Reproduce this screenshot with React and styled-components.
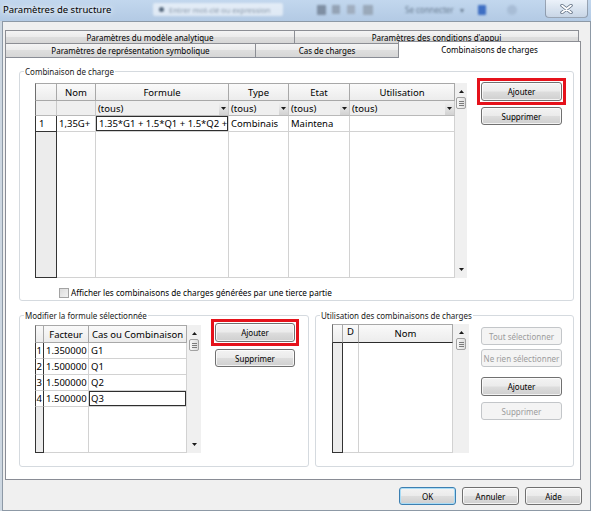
import React from "react";
import styled, { createGlobalStyle, css } from "styled-components";

const GlobalStyle = createGlobalStyle`
  html, body { margin: 0; padding: 0; background: #ffffff; }
  body { font-family: "Noto Sans", "Open Sans", sans-serif; font-size: 8px; color: #000; }
  *, *::before, *::after { box-sizing: border-box; }
`;

const Window = styled.div`
  width: 591px;
  height: 511px;
  display: flex;
  flex-direction: column;
  background: #cdd7e1;
`;

/* ---------- title bar (aero glass) ---------- */
const TitleBar = styled.div`
  height: 21px;
  flex-shrink: 0;
  display: flex;
  align-items: flex-start;
  background: linear-gradient(180deg, #c2d7ee 0%, #b3cae4 100%);
`;
const Title = styled.div`
  width: 145px;
  padding-left: 3px;
  font-size: 9.5px;
  line-height: 19px;
  white-space: nowrap;
  text-shadow: 0 0 4px #fff, 0 0 8px #fff;
`;
const Glass = styled.div`
  flex: 1;
  height: 19px;
  display: flex;
  align-items: center;
  filter: blur(1.2px);
`;
const SearchBox = styled.div`
  margin-left: 8px;
  width: 130px;
  height: 13px;
  border-radius: 2px;
  background: rgba(255, 255, 255, 0.55);
  display: flex;
  align-items: center;
  gap: 5px;
  padding-left: 6px;
  color: #8796a8;
  font-size: 7.5px;
  white-space: nowrap;
`;
const Dot = styled.span`
  width: 5px;
  height: 5px;
  border-radius: 50%;
  background: #53657a;
`;
const GlassText = styled.span`
  margin-left: ${(p) => p.$ml}px;
  color: #66798e;
  font-size: 8px;
  white-space: nowrap;
`;
const GlassSquare = styled.span`
  margin-left: ${(p) => p.$ml}px;
  width: ${(p) => p.$w}px;
  height: ${(p) => p.$h}px;
  border-radius: ${(p) => (p.$round ? "50%" : "1px")};
  background: ${(p) => p.$c};
`;
const CloseBtn = styled.div`
  width: 43px;
  height: 18px;
  margin-right: 3px;
  border: 1px solid rgba(90, 105, 125, 0.55);
  border-top: none;
  border-radius: 0 0 4px 4px;
  background: linear-gradient(180deg, rgba(245, 248, 252, 0.8), rgba(205, 216, 230, 0.8));
  display: flex;
  align-items: center;
  justify-content: center;
`;

/* ---------- dialog body ---------- */
const Body = styled.div`
  margin-left: 2px;
  flex: 1;
  background: #f0f0f0;
  border: 1px solid #8d99a6;
  padding: 8px 9px 0 2px;
  display: flex;
  flex-direction: column;
`;
const TabRow = styled.div`
  display: flex;
  align-items: flex-end;
  height: ${(p) => p.$h}px;
`;
const Tab = styled.div`
  width: ${(p) => p.$w}px;
  height: 100%;
  flex-shrink: 0;
  display: flex;
  align-items: center;
  justify-content: center;
  border: 1px solid #8c8e94;
  border-bottom: none;
  background: linear-gradient(180deg, #f4f4f4 0%, #ebebeb 50%, #dedede 50%, #d6d6d6 100%);
  white-space: nowrap;
  & + & { margin-left: -1px; }
  ${(p) =>
    p.$active &&
    css`
      background: #fff;
      height: 17px;
      margin-bottom: -1px;
      position: relative;
      z-index: 1;
      padding-bottom: 2px;
    `}
`;
const Panel = styled.div`
  width: 576px;
  height: 423px;
  flex-shrink: 0;
  background: #fff;
  border: 1px solid #898c95;
  padding: 8px 6px 12px 13px;
  display: flex;
  flex-direction: column;
  gap: 9px;
`;
const Group = styled.fieldset`
  margin: 0;
  min-width: 0;
  flex-shrink: 0;
  width: ${(p) => p.$w}px;
  height: ${(p) => p.$h}px;
  padding: 0 0 0 4px;
  border: 1px solid #d5dadf;
  border-radius: 3px;
`;
const Legend = styled.legend`
  padding: 0 1px;
  font-size: 8px;
  line-height: 11px;
  color: #1a1a1a;
`;
const GroupBody = styled.div`
  display: flex;
  align-items: flex-start;
  gap: ${(p) => p.$gap}px;
  padding-left: ${(p) => p.$pl}px;
  padding-top: ${(p) => p.$pt || 0}px;
`;
const Col = styled.div`
  display: flex;
  flex-direction: column;
  align-items: ${(p) => p.$align || "flex-start"};
  margin-top: ${(p) => p.$mt || 0}px;
`;
const GroupsRow = styled.div`
  display: flex;
  gap: 6px;
`;
const CheckRow = styled.label`
  display: flex;
  align-items: center;
  gap: 2px;
  margin: 9px 0 0 24px;
  white-space: nowrap;
  font-size: 8.2px;
`;
const CheckBox = styled.span`
  width: 10px;
  height: 10px;
  border: 1px solid #a3a3a3;
  background: linear-gradient(135deg, #dcdcdc, #f2f2f2);
`;

/* ---------- buttons ---------- */
const Button = styled.button`
  width: ${(p) => p.$w || 81}px;
  height: ${(p) => p.$h || 18}px;
  margin-top: ${(p) => p.$mt || 0}px;
  padding: 0;
  font-family: inherit;
  font-size: 8px;
  color: #000;
  white-space: nowrap;
  overflow: hidden;
  border: 1px solid #707070;
  border-radius: 3px;
  background: linear-gradient(180deg, #f3f3f3 0%, #ebebeb 48%, #dddddd 52%, #cfcfcf 100%);
  box-shadow: inset 0 0 0 1px rgba(255, 255, 255, 0.75);
  ${(p) =>
    p.disabled &&
    css`
      border-color: #c3c6c9;
      background: #f4f4f4;
      color: #9c9c9c;
      box-shadow: none;
    `}
  ${(p) =>
    p.$default &&
    css`
      border-color: #3c7fb1;
      box-shadow: inset 0 0 0 1px #a9dcf6;
    `}
`;
const Highlight = styled.div`
  display: flex;
  border: 3px solid #e5121b;
  padding: 1px;
`;
const Footer = styled.div`
  display: flex;
  justify-content: flex-end;
  gap: 6px;
  margin: 7px -1px 0 0;
`;

/* ---------- data grids ---------- */
const GridFrame = styled.div`
  display: flex;
  flex-shrink: 0;
  width: ${(p) => p.$w}px;
  height: ${(p) => p.$h}px;
  background: #fff;
`;
const Table = styled.table`
  border-collapse: separate;
  border-spacing: 0;
  table-layout: fixed;
  width: ${(p) => p.$w}px;
  height: 100%;
  font-size: 9.5px;
`;
const ColW = styled.col`
  width: ${(p) => p.$w}px;
`;
const Row = styled.tr`
  height: ${(p) => p.$h}px;
`;
const Head = styled.th`
  padding: 0;
  font-weight: normal;
  text-align: center;
  vertical-align: ${(p) => (p.$top ? "top" : "middle")};
  white-space: nowrap;
  overflow: hidden;
  background: linear-gradient(180deg, #fafafa, #ececec);
  border-top: 1px solid #a8a8a8;
  border-right: 1px solid #a8a8a8;
  border-bottom: 1px solid ${(p) => (p.$dark ? "#2c2c2c" : "#a8a8a8")};
  ${(p) => p.$first && css`border-left: 1px solid #6e6e6e;`}
`;
const Filter = styled.td`
  padding: 0;
  background: #efefef;
  border-right: 1px solid #c9c9c9;
  border-bottom: 1px solid #b9b9b9;
  ${(p) => p.$first && css`border-left: 1px solid #6e6e6e;`}
`;
const FilterInner = styled.div`
  display: flex;
  align-items: center;
  height: 14px;
  padding-left: 2px;
  white-space: nowrap;
  overflow: hidden;
`;
const DropBtn = styled.span`
  margin-left: auto;
  width: 9px;
  height: 13px;
  flex-shrink: 0;
  display: flex;
  align-items: center;
  justify-content: center;
  background: linear-gradient(180deg, #f0f0f0, #d2d2d2);
`;
const Cell = styled.td`
  padding: 0 0 0 ${(p) => p.$pl ?? 2}px;
  white-space: nowrap;
  overflow: hidden;
  vertical-align: middle;
  background: #fff;
  border-right: 1px solid #d2d2d2;
  border-bottom: 1px solid #d2d2d2;
  ${(p) => p.$sel && css`box-shadow: inset 0 0 0 1px #2e2e2e;`}
`;
const RowHead = styled.td`
  padding: 0 ${(p) => (p.$right ? 1 : 0)}px 0 ${(p) => (p.$right ? 0 : 3)}px;
  text-align: ${(p) => (p.$right ? "right" : "left")};
  white-space: nowrap;
  overflow: hidden;
  background: ${(p) => (p.$filler ? "#ececec" : "#fff")};
  border-left: 1px solid #333;
  border-right: 1px solid #333;
  border-bottom: 1px solid ${(p) => (p.$light ? "#cfcfcf" : "#333")};
`;
const VScroll = styled.div`
  width: ${(p) => p.$w}px;
  flex-shrink: 0;
  height: 100%;
  background: #f0f0f0;
  display: flex;
  flex-direction: column;
  align-items: center;
  padding: 7px 0 7px;
`;
const Thumb = styled.div`
  width: 10px;
  height: 12px;
  margin-top: 4px;
  border: 1px solid #a2a2a2;
  border-radius: 2px;
  background: linear-gradient(90deg, #f7f7f7, #dedede);
  display: flex;
  flex-direction: column;
  align-items: center;
  justify-content: center;
  gap: 1px;
  & > i { width: 5px; height: 1px; background: #7b7b7b; }
`;
const DownArrow = styled.div`
  margin-top: auto;
  display: flex;
`;

const Tri = ({ down }) => (
  <svg width="5" height="3" viewBox="0 0 5 3">
    <path d={down ? "M0 0h5L2.5 3z" : "M0 3h5L2.5 0z"} fill="#1a1a1a" />
  </svg>
);

function Scrollbar({ w, noDown }) {
  return (
    <VScroll $w={w}>
      <Tri />
      <Thumb>
        <i />
        <i />
        <i />
      </Thumb>
      {!noDown && (
        <DownArrow>
          <Tri down />
        </DownArrow>
      )}
    </VScroll>
  );
}

function DropCell({ children }) {
  return (
    <Filter>
      <FilterInner>
        <span>{children}</span>
        <DropBtn>
          <Tri down />
        </DropBtn>
      </FilterInner>
    </Filter>
  );
}

function CombinationsGrid() {
  return (
    <GridFrame $w={432} $h={195}>
      <Table $w={420}>
        <colgroup>
          <ColW $w={22} />
          <ColW $w={39} />
          <ColW $w={133} />
          <ColW $w={60} />
          <ColW $w={61} />
          <ColW $w={105} />
        </colgroup>
        <tbody>
          <Row $h={18}>
            <Head $first />
            <Head>Nom</Head>
            <Head>Formule</Head>
            <Head>Type</Head>
            <Head>Etat</Head>
            <Head>Utilisation</Head>
          </Row>
          <Row $h={15}>
            <Filter $first />
            <Filter />
            <DropCell>(tous)</DropCell>
            <DropCell>(tous)</DropCell>
            <DropCell>(tous)</DropCell>
            <DropCell>(tous)</DropCell>
          </Row>
          <Row $h={16}>
            <RowHead>1</RowHead>
            <Cell>1,35G+</Cell>
            <Cell $sel $pl={3}>1.35*G1 + 1.5*Q1 + 1.5*Q2 +</Cell>
            <Cell>Combinais</Cell>
            <Cell>Maintena</Cell>
            <Cell />
          </Row>
          <Row $h={146}>
            <RowHead $filler />
            <Cell />
            <Cell />
            <Cell />
            <Cell />
            <Cell />
          </Row>
        </tbody>
      </Table>
      <Scrollbar w={12} />
    </GridFrame>
  );
}

const formula = [
  ["1", "1.350000", "G1"],
  ["2", "1.500000", "Q1"],
  ["3", "1.500000", "Q2"],
  ["4", "1.500000", "Q3"],
];

function FormulaGrid() {
  return (
    <GridFrame $w={166} $h={128}>
      <Table $w={152}>
        <colgroup>
          <ColW $w={9} />
          <ColW $w={45} />
          <ColW $w={98} />
        </colgroup>
        <tbody>
          <Row $h={18}>
            <Head $first />
            <Head>Facteur</Head>
            <Head>Cas ou Combinaison</Head>
          </Row>
          {formula.map(([n, f, c], i) => (
            <Row $h={16} key={n}>
              <RowHead $right $light>
                {n}
              </RowHead>
              <Cell>{f}</Cell>
              <Cell $sel={i === 3}>{c}</Cell>
            </Row>
          ))}
          <Row $h={46}>
            <RowHead $filler />
            <Cell />
            <Cell />
          </Row>
        </tbody>
      </Table>
      <Scrollbar w={14} />
    </GridFrame>
  );
}

function UsageGrid() {
  return (
    <GridFrame $w={137} $h={129}>
      <Table $w={121}>
        <colgroup>
          <ColW $w={11} />
          <ColW $w={16} />
          <ColW $w={94} />
        </colgroup>
        <tbody>
          <Row $h={19}>
            <Head $first $dark />
            <Head $dark $top>
              D
            </Head>
            <Head $dark>Nom</Head>
          </Row>
          <Row $h={110}>
            <RowHead $filler />
            <Cell />
            <Cell />
          </Row>
        </tbody>
      </Table>
      <Scrollbar w={16} noDown />
    </GridFrame>
  );
}

export default function App() {
  return (
    <>
      <GlobalStyle />
      <Window>
        <TitleBar>
          <Title>Paramètres de structure</Title>
          <Glass>
            <SearchBox>
              <Dot />
              Entrer mot-clé ou expression
            </SearchBox>
            <GlassSquare $ml={34} $w={9} $h={10} $c="#7f8fa3" />
            <GlassSquare $ml={6} $w={8} $h={9} $c="#94a3b5" />
            <GlassSquare $ml={7} $w={8} $h={9} $c="#a0aebf" />
            <GlassSquare $ml={8} $w={10} $h={10} $c="#9aa9ba" />
            <GlassText $ml={32}>Se connecter</GlassText>
            <GlassText $ml={6}>▾</GlassText>
            <GlassSquare $ml={14} $w={8} $h={10} $c="#3f6fc3" />
            <GlassSquare $ml={21} $w={10} $h={10} $c="#a8bdd6" $round />
          </Glass>
          <CloseBtn>
            <svg width="13" height="10" viewBox="0 0 13 10">
              <path d="M2 1.5L11 8.5M11 1.5L2 8.5" stroke="#5d6c80" strokeWidth="3.4" strokeLinecap="round" />
              <path d="M2 1.5L11 8.5M11 1.5L2 8.5" stroke="#ffffff" strokeWidth="1.8" strokeLinecap="round" />
            </svg>
          </CloseBtn>
        </TitleBar>

        <Body>
          <TabRow $h={13}>
            <Tab $w={290}>Paramètres du modèle analytique</Tab>
            <Tab $w={285}>Paramètres des conditions d'appui</Tab>
          </TabRow>
          <TabRow $h={14}>
            <Tab $w={251}>Paramètres de représentation symbolique</Tab>
            <Tab $w={144}>Cas de charges</Tab>
            <Tab $w={183} $active>
              Combinaisons de charges
            </Tab>
          </TabRow>

          <Panel>
            <Group $w={555} $h={235}>
              <Legend>Combinaison de charge</Legend>
              <GroupBody $gap={10} $pl={11} $pt={1}>
                <Col $mt={5}>
                  <CombinationsGrid />
                  <CheckRow>
                    <CheckBox />
                    Afficher les combinaisons de charges générées par une tierce partie
                  </CheckRow>
                </Col>
                <Col $align="center">
                  <Highlight>
                    <Button $h={19}>Ajouter</Button>
                  </Highlight>
                  <Button $mt={2}>Supprimer</Button>
                </Col>
              </GroupBody>
            </Group>

            <GroupsRow>
              <Group $w={290} $h={157}>
                <Legend>Modifier la formule sélectionnée</Legend>
                <GroupBody $gap={10} $pl={11}>
                  <Col $mt={4}>
                    <FormulaGrid />
                  </Col>
                  <Col $align="center" $mt={-2}>
                    <Highlight>
                      <Button $w={80} $h={19}>
                        Ajouter
                      </Button>
                    </Highlight>
                    <Button $w={80} $mt={3}>
                      Supprimer
                    </Button>
                  </Col>
                </GroupBody>
              </Group>

              <Group $w={259} $h={157}>
                <Legend>Utilisation des combinaisons de charges</Legend>
                <GroupBody $gap={12} $pl={12}>
                  <Col $mt={3}>
                    <UsageGrid />
                  </Col>
                  <Col $mt={6}>
                    <Button disabled>Tout sélectionner</Button>
                    <Button disabled $mt={4}>
                      Ne rien sélectionner
                    </Button>
                    <Button $mt={10} $h={19}>
                      Ajouter
                    </Button>
                    <Button disabled $mt={6}>
                      Supprimer
                    </Button>
                  </Col>
                </GroupBody>
              </Group>
            </GroupsRow>
          </Panel>

          <Footer>
            <Button $w={57} $default>
              OK
            </Button>
            <Button $w={57}>Annuler</Button>
            <Button $w={57}>Aide</Button>
          </Footer>
        </Body>
      </Window>
    </>
  );
}
